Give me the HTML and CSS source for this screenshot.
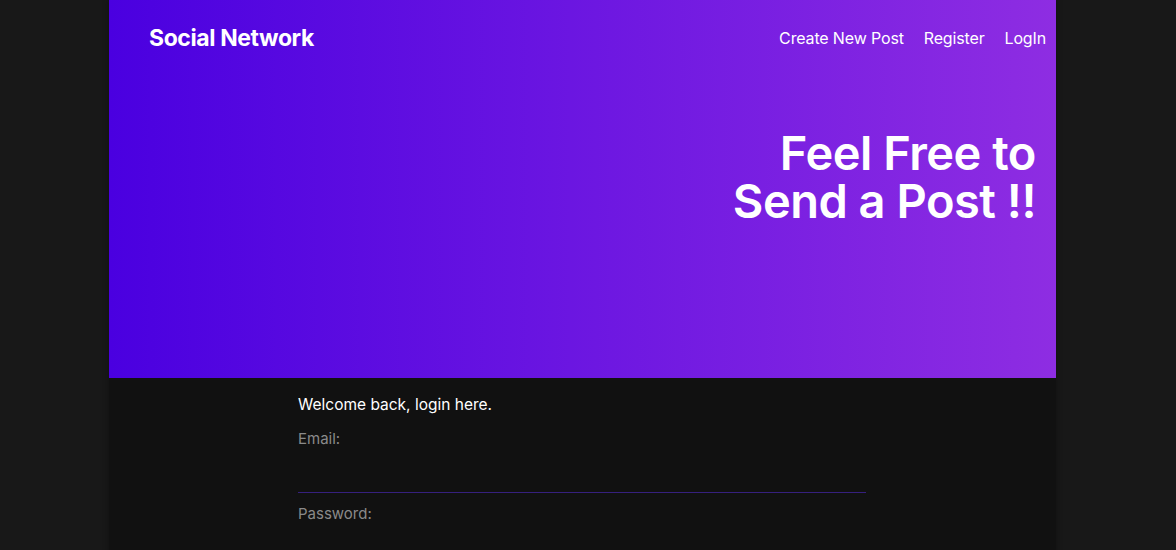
FILE: index.html
```html
<!DOCTYPE html>
<html>
<head>
<meta charset="utf-8">
<link rel="stylesheet" href="styles.css">
</head>
<body>
<div class="page">
  <header class="hero">
    <nav class="nav">
      <div class="brand">Social Network</div>
      <div class="links">
        <a href="#">Create New Post</a>
        <a href="#">Register</a>
        <a href="#">LogIn</a>
      </div>
    </nav>
    <h1 class="headline">Feel Free to<br>Send a Post !!</h1>
  </header>
  <main class="content">
    <form class="login">
      <p class="welcome">Welcome back, login here.</p>
      <label class="label">Email:</label>
      <input class="field" type="email">
      <label class="label">Password:</label>
      <input class="field" type="password">
    </form>
  </main>
</div>
</body>
</html>
```
FILE: styles.css
```css
html, body {
  margin: 0;
  padding: 0;
  background: #181818;
  font-family: "Inter", "Roboto", sans-serif;
  height: 100%;
}
.page {
  width: 947px;
  margin: 0 0 0 109px;
  background: #111111;
  min-height: 100%;
  box-shadow: 0 0 6px rgba(0,0,0,0.35);
}
.hero {
  height: 378px;
  background: linear-gradient(to right, #4a00e0, #8e2de2);
  display: flex;
  flex-direction: column;
  box-sizing: border-box;
  padding: 0 10px 0 40px;
}
.nav {
  display: flex;
  justify-content: space-between;
  align-items: center;
  height: 75px;
}
.brand {
  color: #fff;
  font-size: 23px;
  font-weight: 700;
  letter-spacing: -0.4px;
}
.links {
  display: flex;
  gap: 20px;
}
.links a {
  color: #fff;
  text-decoration: none;
  font-size: 16px;
  letter-spacing: -0.15px;
}
.headline {
  align-self: flex-end;
  text-align: right;
  color: #fff;
  font-size: 47px;
  font-weight: 600;
  line-height: 48px;
  letter-spacing: -0.5px;
  margin: 54px 10px 0 0;
}
.content {
  padding: 17px 0 0 189px;
}
.login {
  width: 568px;
  display: flex;
  flex-direction: column;
}
.welcome {
  color: #fff;
  font-size: 15.5px;
  margin: 0 0 15px;
  letter-spacing: 0;
}
.label {
  color: #8a8a8a;
  font-size: 15px;
  letter-spacing: 0;
}
.field {
  background: transparent;
  border: none;
  border-bottom: 1px solid #36207e;
  height: 44px;
  margin-bottom: 11px;
  padding: 0;
  outline: none;
  color: #fff;
}
```
